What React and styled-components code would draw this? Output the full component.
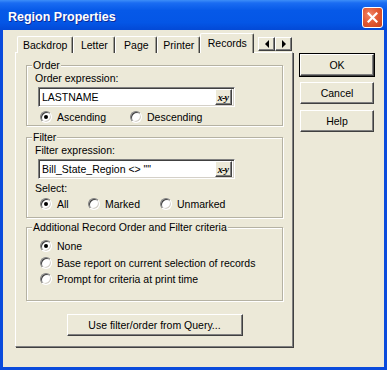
import React from 'react';
import styled, { createGlobalStyle } from 'styled-components';

const GlobalStyle = createGlobalStyle`
  html, body {
    margin: 0;
    padding: 0;
    background: #ece9d8;
  }
  body {
    font-family: "Liberation Sans", Arial, sans-serif;
    font-size: 10.5px;
    color: #000;
  }
`;

const Window = styled.div`
  width: 387px;
  height: 370px;
  display: flex;
  flex-direction: column;
  overflow: hidden;
`;

const TitleBar = styled.div`
  height: 30px;
  flex: none;
  box-sizing: border-box;
  display: flex;
  align-items: center;
  justify-content: space-between;
  padding: 3px 4px 0 8px;
  background: linear-gradient(180deg, #3d8ef8 0%, #1a6cf2 10%, #0659e8 35%, #0456e6 75%, #0349d6 100%);
  color: #fff;
  font-weight: bold;
  font-size: 12.5px;
  text-shadow: 1px 1px 0 #0c2a98;
`;

const CloseBox = styled.div`
  width: 21px;
  height: 21px;
  box-sizing: border-box;
  margin-top: 1px;
  border: 1px solid #fff;
  border-radius: 3px;
  background: radial-gradient(circle at 35% 35%, #f0876a 0%, #e35a35 45%, #c8401c 100%);
  display: flex;
  align-items: center;
  justify-content: center;
`;

const Body = styled.div`
  flex: 1;
  display: flex;
  gap: 7px;
  padding: 3px 0 0 12px;
  border: solid #0a4bdc;
  border-width: 0 3px 3px 3px;
  background: #ece9d8;
`;

const LeftCol = styled.div`
  width: 278px;
  display: flex;
  flex-direction: column;
`;

const TabRow = styled.div`
  height: 20px;
  display: flex;
  align-items: flex-end;
  padding: 0 1px 0 2px;
  margin-bottom: -1px;
  position: relative;
  z-index: 2;
`;

const Tab = styled.div`
  box-sizing: border-box;
  min-width: ${p => (p.$active ? 54 : 42)}px;
  height: ${p => (p.$active ? 20 : 17)}px;
  padding: 0 5px ${p => (p.$active ? 2 : 0)}px;
  display: flex;
  align-items: center;
  justify-content: center;
  background: #ece9d8;
  border: 1px solid;
  border-color: #fff #404040 transparent #fff;
  border-bottom: none;
  border-radius: 2px 2px 0 0;
  box-shadow: inset -1px 0 0 #a09e92;
  position: relative;
  z-index: ${p => (p.$active ? 2 : 1)};
`;

const Scroller = styled.div`
  margin-left: auto;
  align-self: flex-start;
  margin-top: 4px;
  display: flex;
`;

const ScrollBtn = styled.div`
  width: 17px;
  height: 14px;
  box-sizing: border-box;
  border: 1px solid;
  border-color: #fff #404040 #404040 #fff;
  box-shadow: inset -1px -1px 0 #808080;
  display: flex;
  align-items: center;
  justify-content: center;
`;

const Arrow = styled.span`
  width: 0;
  height: 0;
  border-top: 4px solid transparent;
  border-bottom: 4px solid transparent;
  ${p => (p.$dir === 'left' ? 'border-right: 4px solid #000;' : 'border-left: 4px solid #000;')}
`;

const Panel = styled.div`
  height: 295px;
  box-sizing: border-box;
  border: 1px solid;
  border-color: #fff #808080 #808080 #fff;
  box-shadow: 1px 1px 0 #404040;
  padding: 6px 9px 0 10px;
  display: flex;
  flex-direction: column;
`;

const Group = styled.fieldset`
  margin: ${p => p.$top || 0}px 0 0;
  padding: 0 8px ${p => p.$bottom || 1}px;
  border: 1px solid #b5b2a3;
  box-shadow: inset 1px 1px 0 #fff, 1px 1px 0 #fff;
  display: flex;
  flex-direction: column;
  min-width: 0;
`;

const Legend = styled.legend`
  padding: 0 1px;
  margin-left: -3px;
  line-height: 13px;
  background: #ece9d8;
`;

const FieldLabel = styled.div`
  line-height: 13px;
  margin-top: ${p => p.$top || 0}px;
`;

const ExprBox = styled.div`
  width: 197px;
  height: 20px;
  margin: 2px 0 0 3px;
  box-sizing: border-box;
  border: 1px solid;
  border-color: #808080 #fff #fff #808080;
  box-shadow: inset 1px 1px 0 #404040, inset -1px -1px 0 #d4d0c8;
  background: #fff;
  display: flex;
  align-items: center;
  padding: 0 2px 0 3px;
`;

const ExprText = styled.span`
  flex: 1;
  white-space: pre;
`;

const XYButton = styled.div`
  width: 17px;
  height: 16px;
  box-sizing: border-box;
  border: 1px solid;
  border-color: #fff #404040 #404040 #fff;
  box-shadow: inset -1px -1px 0 #808080;
  background: #ece9d8;
  display: flex;
  align-items: center;
  justify-content: center;
  font-family: "Liberation Serif", "Times New Roman", serif;
  font-style: italic;
  font-weight: bold;
  font-size: 10px;
  letter-spacing: -0.8px;
  padding-right: 1px;
`;

const RadioRow = styled.div`
  display: flex;
  margin: ${p => p.$top || 0}px 0 0 5px;
`;

const RadioStack = styled.div`
  display: flex;
  flex-direction: column;
  margin: 4px 0 0 5px;
`;

const RadioItem = styled.label`
  display: flex;
  align-items: center;
  gap: 5px;
  height: ${p => p.$h || 14}px;
  width: ${p => (p.$w ? `${p.$w}px` : 'auto')};
`;

const RadioCircle = styled.span`
  width: 12px;
  height: 12px;
  flex: none;
  box-sizing: border-box;
  border-radius: 50%;
  background: #fff;
  border: 1px solid;
  border-color: #808080 #fff #fff #808080;
  box-shadow: inset 1px 1px 0 #404040, inset -1px -1px 0 #d4d0c8;
  display: flex;
  align-items: center;
  justify-content: center;
  &::after {
    content: '';
    width: 4px;
    height: 4px;
    border-radius: 50%;
    background: #000;
    display: ${p => (p.$checked ? 'block' : 'none')};
  }
`;

const PushButton = styled.div`
  width: ${p => p.$w || 74}px;
  height: 22px;
  box-sizing: border-box;
  border: 1px solid;
  border-color: #fff #404040 #404040 #fff;
  box-shadow: inset -1px -1px 0 #808080${p => (p.$default ? ', 0 0 0 1px #000' : '')};
  background: #ece9d8;
  display: flex;
  align-items: center;
  justify-content: center;
  flex: none;
`;

const QueryButton = styled(PushButton)`
  align-self: center;
  margin-top: 13px;
`;

const RightCol = styled.div`
  display: flex;
  flex-direction: column;
  gap: 6px;
  padding-top: 21px;
`;

const Radio = ({ checked, children, w, h }) => (
  <RadioItem $w={w} $h={h}>
    <RadioCircle $checked={checked} />
    <span>{children}</span>
  </RadioItem>
);

const tabs = ['Backdrop', 'Letter', 'Page', 'Printer', 'Records'];

export default function App() {
  return (
    <>
      <GlobalStyle />
      <Window>
        <TitleBar>
          <span>Region Properties</span>
          <CloseBox>
            <svg width="11" height="11" viewBox="0 0 11 11">
              <path d="M1.5 1.5 L9.5 9.5 M9.5 1.5 L1.5 9.5" stroke="#fff" strokeWidth="2.2" strokeLinecap="square" />
            </svg>
          </CloseBox>
        </TitleBar>
        <Body>
          <LeftCol>
            <TabRow>
              {tabs.map(t => (
                <Tab key={t} $active={t === 'Records'}>{t}</Tab>
              ))}
              <Scroller>
                <ScrollBtn><Arrow $dir="left" /></ScrollBtn>
                <ScrollBtn><Arrow $dir="right" /></ScrollBtn>
              </Scroller>
            </TabRow>
            <Panel>
              <Group>
                <Legend>Order</Legend>
                <FieldLabel>Order expression:</FieldLabel>
                <ExprBox>
                  <ExprText>LASTNAME</ExprText>
                  <XYButton>x-y</XYButton>
                </ExprBox>
                <RadioRow $top={3}>
                  <Radio checked w={90}>Ascending</Radio>
                  <Radio>Descending</Radio>
                </RadioRow>
              </Group>
              <Group $top={5} $bottom={6}>
                <Legend>Filter</Legend>
                <FieldLabel>Filter expression:</FieldLabel>
                <ExprBox>
                  <ExprText>{'Bill_State_Region <> ""'}</ExprText>
                  <XYButton>x-y</XYButton>
                </ExprBox>
                <FieldLabel $top={3}>Select:</FieldLabel>
                <RadioRow $top={2}>
                  <Radio checked w={48}>All</Radio>
                  <Radio w={72}>Marked</Radio>
                  <Radio>Unmarked</Radio>
                </RadioRow>
              </Group>
              <Group $top={3} $bottom={12}>
                <Legend>Additional Record Order and Filter criteria</Legend>
                <RadioStack>
                  <Radio checked h={16.5}>None</Radio>
                  <Radio h={16.5}>Base report on current selection of records</Radio>
                  <Radio h={16.5}>Prompt for criteria at print time</Radio>
                </RadioStack>
              </Group>
              <QueryButton $w={176}>Use filter/order from Query...</QueryButton>
            </Panel>
          </LeftCol>
          <RightCol>
            <PushButton $default>OK</PushButton>
            <PushButton>Cancel</PushButton>
            <PushButton>Help</PushButton>
          </RightCol>
        </Body>
      </Window>
    </>
  );
}
